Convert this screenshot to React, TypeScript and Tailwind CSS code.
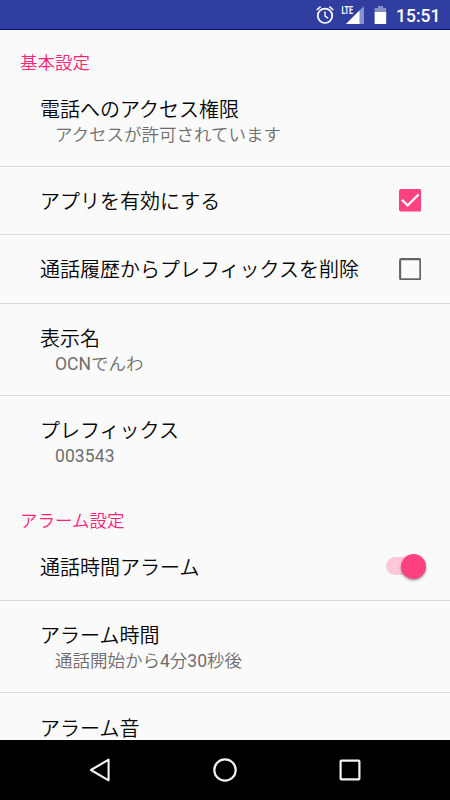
import React, { useState } from 'react';

interface PreferenceProps {
  title: string;
  summary?: React.ReactNode;
  divider?: boolean;
  children?: React.ReactNode;
}

const StatusBar: React.FC = () => (
  <header className="flex h-[30px] shrink-0 items-center justify-end border-b border-[#000f85] bg-[#303f9f] pt-px pr-[11px] text-white">
    <svg className="h-5 w-5" viewBox="0 0 20 20" fill="none" stroke="currentColor">
      <circle cx="10" cy="10.8" r="7.2" strokeWidth="1.7" />
      <path d="M10 6.6v4.6l3.2 2" strokeWidth="1.4" />
      <path d="M1.7 5l3.9-3.3M18.3 5l-3.9-3.3" strokeWidth="1.6" />
    </svg>
    <svg className="ml-[6px] h-5 w-[23px]" viewBox="0 0 23 20" fill="none">
      <path d="M23 1v18H5z" fill="#8790c8" />
      <path d="M18.5 5.5V19H5z" fill="white" />
      <path d="M0 0h13.5v9.8H0z" fill="#303f9f" />
      <text x="0.5" y="9" fontSize="11.3" fontWeight="700" fontFamily="Roboto, sans-serif" fill="white" textLength="11.5" lengthAdjust="spacingAndGlyphs">LTE</text>
    </svg>
    <svg className="ml-[10px] h-5 w-[13px]" viewBox="0 0 13 20">
      <path d="M4 1h5v2h3.2v4H.6V3H4z" fill="#8790c8" />
      <path d="M.6 7h11.6v12H.6z" fill="white" />
    </svg>
    <span className="ml-[9px] w-[43px] pt-[3px] text-[17.5px] leading-none font-medium">15:51</span>
  </header>
);

const SectionTitle: React.FC<{ className: string; children: React.ReactNode }> = ({ className, children }) => (
  <h2 className={`flex shrink-0 items-end pl-5 text-[17.5px] leading-[24px] text-[#ff2275] ${className}`}>
    {children}
  </h2>
);

const Preference: React.FC<PreferenceProps> = ({ title, summary, divider = true, children }) => (
  <div
    className={`flex shrink-0 items-center justify-between pl-10 ${divider ? 'border-b border-[#dadada]' : ''} ${
      summary ? 'h-[92px]' : 'h-[68.5px]'
    }`}
  >
    <div className="pt-[3px] whitespace-nowrap">
      <div className="text-[20px] leading-[26px] text-[#060606]">{title}</div>
      {summary && <div className="pl-[15px] text-[17.5px] leading-[24px] text-[#6e6e6e]">{summary}</div>}
    </div>
    {children}
  </div>
);

// Latin letters and digits keep the regular weight next to the lighter kana and kanji
const Latin: React.FC<{ children: React.ReactNode }> = ({ children }) => (
  <span className="font-normal">{children}</span>
);

const Checkbox: React.FC<{ checked: boolean; onChange: () => void; label: string }> = ({ checked, onChange, label }) => (
  <button role="checkbox" aria-checked={checked} aria-label={label} onClick={onChange} className="mr-[28.75px]">
    {checked ? (
      <svg className="block h-[22.5px] w-[22.5px]" viewBox="0 0 22 22" fill="none">
        <rect width="22" height="22" rx="2" fill="#ff4081" />
        <path d="M2.8 10.6l5.7 5.4L19.2 5.4" stroke="white" strokeWidth="2.3" />
      </svg>
    ) : (
      <svg className="block h-[22.5px] w-[22.5px]" viewBox="0 0 22 22" fill="none">
        <rect x="1.1" y="1.1" width="19.8" height="19.8" rx="1.3" stroke="#646464" strokeWidth="2.1" />
      </svg>
    )}
  </button>
);

const Switch: React.FC<{ on: boolean; onChange: () => void; label: string }> = ({ on, onChange, label }) => (
  <button
    role="switch"
    aria-checked={on}
    aria-label={label}
    onClick={onChange}
    className={`mr-6 flex h-[18px] w-[40px] items-center rounded-full ${on ? 'justify-end bg-[#fcc8d9]' : 'bg-gray-300'}`}
  >
    <span
      className={`h-[25px] w-[25px] rounded-full shadow-[0_1.5px_2.5px_rgba(0,0,0,0.4)] ${on ? 'bg-[#ff4081]' : 'bg-gray-50'}`}
    />
  </button>
);

const NavigationBar: React.FC = () => (
  <nav className="flex h-[60px] shrink-0 items-center justify-center gap-[97px] bg-black text-[#f2f2f2]">
    <svg className="h-7 w-7" viewBox="0 0 28 28" fill="none" stroke="currentColor" strokeWidth="2.1" strokeLinejoin="round">
      <path d="M22.6 3.7v20.6L4.9 14z" />
    </svg>
    <svg className="h-7 w-7" viewBox="0 0 28 28" fill="none" stroke="currentColor" strokeWidth="2.2">
      <circle cx="14" cy="14" r="10.7" />
    </svg>
    <svg className="h-7 w-7" viewBox="0 0 28 28" fill="none" stroke="currentColor" strokeWidth="2.2">
      <rect x="4.6" y="4.6" width="18.8" height="18.8" rx="0.8" />
    </svg>
  </nav>
);

const App: React.FC = () => {
  const [enabled, setEnabled] = useState(true);
  const [removePrefix, setRemovePrefix] = useState(false);
  const [alarm, setAlarm] = useState(true);

  return (
    <div className="flex h-[800px] w-[450px] flex-col overflow-hidden bg-[#fafafa] font-[Roboto,'Noto_Sans_CJK_JP',sans-serif]">
      <StatusBar />
      <main className="flex min-h-0 flex-1 flex-col overflow-hidden font-[350]">
        <SectionTitle className="h-[44.5px]">基本設定</SectionTitle>
        <Preference title="電話へのアクセス権限" summary="アクセスが許可されています" />
        <Preference title="アプリを有効にする">
          <Checkbox checked={enabled} onChange={() => setEnabled(!enabled)} label="アプリを有効にする" />
        </Preference>
        <Preference title="通話履歴からプレフィックスを削除">
          <Checkbox
            checked={removePrefix}
            onChange={() => setRemovePrefix(!removePrefix)}
            label="通話履歴からプレフィックスを削除"
          />
        </Preference>
        <Preference title="表示名" summary={<><Latin>OCN</Latin>でんわ</>} />
        <Preference title="プレフィックス" summary={<span className="font-normal tracking-[0.1px]">003543</span>} divider={false} />
        <SectionTitle className="h-[45px]">アラーム設定</SectionTitle>
        <Preference title="通話時間アラーム">
          <Switch on={alarm} onChange={() => setAlarm(!alarm)} label="通話時間アラーム" />
        </Preference>
        <Preference
          title="アラーム時間"
          summary={<>通話開始から<Latin>4</Latin>分<Latin>30</Latin>秒後</>}
        />
        <Preference title="アラーム音" divider={false} />
      </main>
      <NavigationBar />
    </div>
  );
};

export default App;
